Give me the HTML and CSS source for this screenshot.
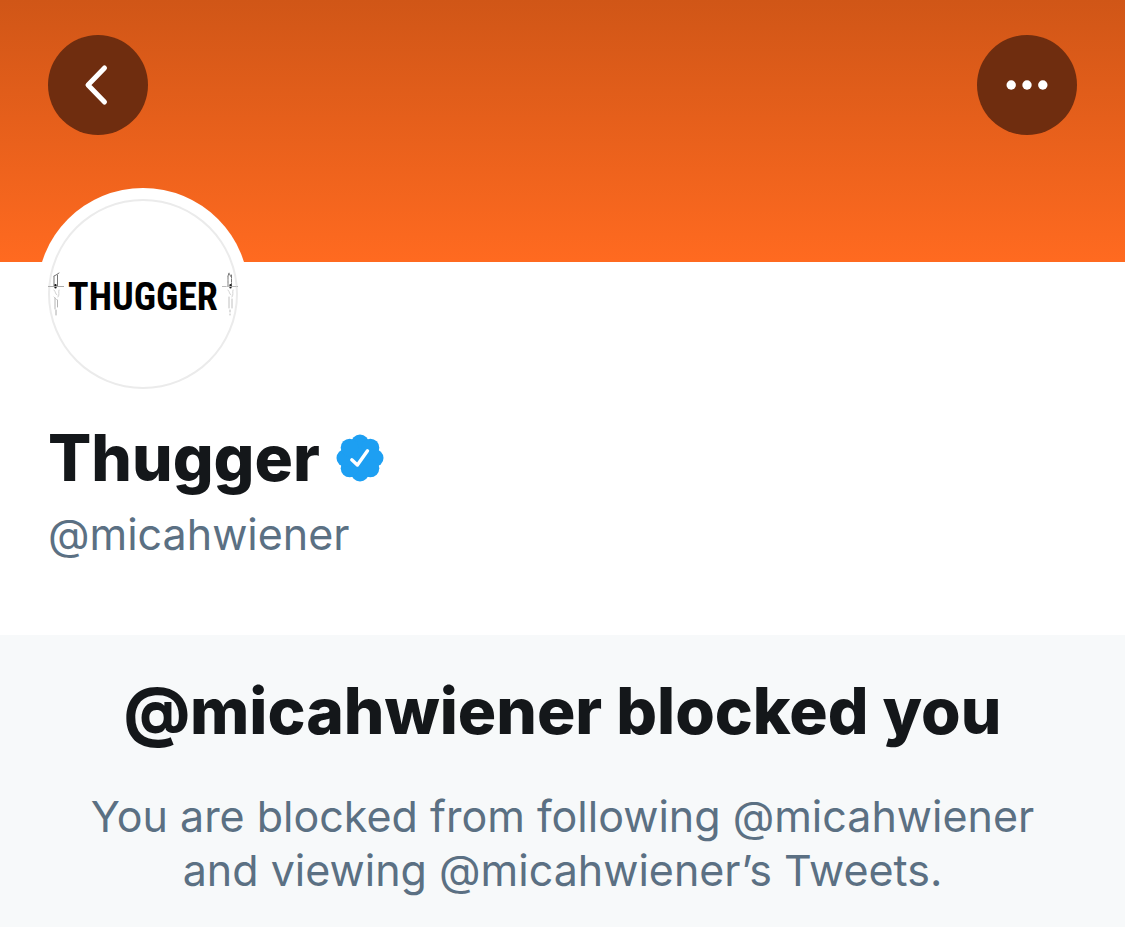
FILE: index.html
```html
<!DOCTYPE html>
<html lang="en">
<head>
<meta charset="utf-8">
<meta name="viewport" content="width=device-width, initial-scale=1">
<title>Thugger (@micahwiener)</title>
<link rel="stylesheet" href="styles.css">
</head>
<body>
<header class="banner">
  <button class="round-button" type="button" aria-label="Back">
    <svg class="round-icon" viewBox="0 0 100 100" aria-hidden="true"><path d="M56.500 33 40 50 56.500 67" fill="none" stroke="#fff" stroke-width="5" stroke-linecap="round" stroke-linejoin="round"/></svg>
  </button>
  <button class="round-button" type="button" aria-label="More">
    <svg class="round-icon" viewBox="0 0 100 100" aria-hidden="true" fill="#fff"><circle cx="34.200" cy="50" r="4.700"/><circle cx="50" cy="50" r="4.700"/><circle cx="65.800" cy="50" r="4.700"/></svg>
  </button>
</header>
<main>
  <section class="profile">
    <div class="avatar">
      <div class="avatar-picture">
        <svg class="dagger" viewBox="0 0 16 46" aria-hidden="true" fill="none" stroke-linecap="round">
          <path d="M6 4.500V14M9.500 3V14M6 4 8 3 11 1" stroke="#777" stroke-width="1"/>
          <path d="M7.500 13v2.500" stroke="#111" stroke-width="2.200"/>
          <path d="M0 14.500H16" stroke="#aaa" stroke-width="1"/>
          <path d="M6 18c2 2 1 4 3 5M11 18c-1 3 1 4-1 7M6 25l3 3" stroke="#d0d0d0" stroke-width="1"/>
          <path d="M7 26v11M9.500 28v7" stroke="#b4b4b4" stroke-width="1"/>
          <path d="M8 38v5" stroke="#aaa" stroke-width="1"/>
        </svg>
        <span class="wordmark">THUGGER</span>
        <svg class="dagger" viewBox="0 0 16 46" aria-hidden="true" fill="none" stroke-linecap="round">
          <path d="M6 4.500V14M9.500 3V14M6 4 7 1 9 5" stroke="#777" stroke-width="1" stroke-dasharray="3 1"/>
          <path d="M8.500 13v2.500" stroke="#222" stroke-width="2.200"/>
          <path d="M0 14.500H16" stroke="#bbb" stroke-width="1" stroke-dasharray="4 1"/>
          <path d="M6 18c2 2 1 4 3 5M11 18c-1 3 1 4-1 7" stroke="#d4d4d4" stroke-width="1"/>
          <path d="M7 25v11M10 27v9" stroke="#c0c0c0" stroke-width="1"/>
          <path d="M8 38v5" stroke="#bbb" stroke-width="1" stroke-dasharray="2 2"/>
        </svg>
      </div>
    </div>
    <div class="name-row">
      <h1 class="title">Thugger</h1>
      <svg class="badge" viewBox="0 0 48 48" role="img" aria-label="Verified account">
        <g fill="#1d9ff2"><circle cx="24" cy="24" r="18"/><circle cx="24" cy="9.500" r="9"/><circle cx="34.300" cy="13.700" r="9"/><circle cx="38.500" cy="24" r="9"/><circle cx="34.300" cy="34.300" r="9"/><circle cx="24" cy="38.500" r="9"/><circle cx="13.700" cy="34.300" r="9"/><circle cx="9.500" cy="24" r="9"/><circle cx="13.700" cy="13.700" r="9"/></g>
        <path d="M15.800 25.800 21.400 31 31.500 16.800" fill="none" stroke="#fff" stroke-width="3.400" stroke-linecap="round" stroke-linejoin="round"/>
      </svg>
    </div>
    <p class="text">@micahwiener</p>
  </section>
  <section class="notice">
    <h2 class="title">@micahwiener blocked you</h2>
    <p class="text">You are blocked from following @micahwiener and viewing @micahwiener’s Tweets.</p>
  </section>
</main>
</body>
</html>
```
FILE: styles.css
```css
* {
  box-sizing: border-box;
}

body {
  display: flex;
  flex-direction: column;
  min-height: 100vh;
  margin: 0;
  background: #fff;
  font-family: Inter, "Liberation Sans", sans-serif;
}

.banner {
  display: flex;
  justify-content: space-between;
  align-items: flex-start;
  height: 262px;
  padding: 35px 48px;
  background: linear-gradient(#d05617, #ff6a20);
}

.round-button {
  width: 100px;
  height: 100px;
  padding: 0;
  border: 0;
  border-radius: 50%;
  background: #6f2d0f;
}

.round-icon {
  display: block;
  width: 100%;
}

main {
  display: flex;
  flex: 1;
  flex-direction: column;
}

.profile {
  padding: 0 48px 74px;
}

.avatar {
  width: 212px;
  height: 212px;
  margin: -74px 0 20px -11px;
  padding: 11px;
  border-radius: 50%;
  background: #fff;
}

.avatar-picture {
  display: flex;
  align-items: center;
  justify-content: space-between;
  height: 100%;
  padding-top: 2px;
  border-radius: 50%;
  box-shadow: inset 0 0 0 2px #ebebeb;
}

.dagger {
  flex: none;
  width: 16px;
  height: 46px;
}

.wordmark {
  padding-top: 4px;
  color: #000;
  font: bold 38px/48px "Roboto Condensed", "Liberation Sans Narrow", Roboto, sans-serif;
}

.name-row {
  display: flex;
  align-items: center;
  gap: 16px;
}

.title {
  margin: 0;
  color: #14171a;
  font-size: 64px;
  font-weight: 800;
  line-height: 76px;
}

.badge {
  width: 48px;
  height: 48px;
}

.text {
  margin: 0;
  color: #5b7083;
  font-size: 43px;
  line-height: 54px;
}

.name-row + .text {
  margin-top: 11px;
}

.notice {
  flex: 1;
  padding: 38px 72px 28px;
  background: #f7f9fa;
  text-align: center;
}

.notice .title {
  margin-bottom: 40px;
}
```
